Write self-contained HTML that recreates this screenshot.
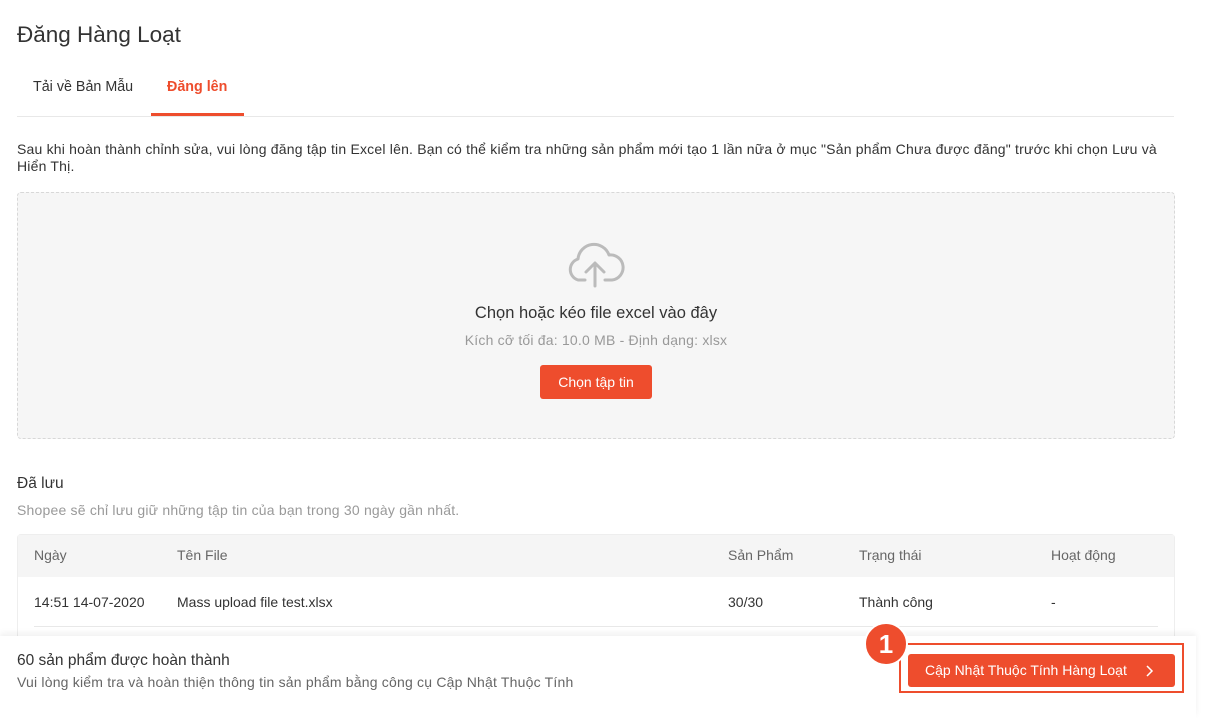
<!DOCTYPE html>
<html><head><meta charset="utf-8"><style>
*{box-sizing:border-box;margin:0;padding:0}
body{width:1206px;height:718px;overflow:hidden;background:#fff;font-family:"Liberation Sans",Arial,sans-serif;color:#333;position:relative}
.s13{font-size:14px;letter-spacing:.2px}
.title{position:absolute;left:17px;top:22px;font-size:22.5px;color:#333}
.tabs{position:absolute;left:17px;top:66px;width:1157px;height:51px;border-bottom:1px solid #e8e8e8}
.tab{position:absolute;top:13px;font-size:14.3px}
.t1{left:16px;color:#333}
.t2{left:150px;color:#ee4d2d;font-weight:bold}
.ul{position:absolute;left:134px;top:47px;width:93px;height:3px;background:#ee4d2d}
.desc{position:absolute;left:17px;top:141px;width:1160px;line-height:17px;color:#333}
.drop{position:absolute;left:17px;top:192px;width:1158px;height:247px;border:1px dashed #d8d8d8;border-radius:4px;background:#f6f6f6;text-align:center}
.drop svg{position:absolute;left:547px;top:47px}
.dt{position:absolute;left:0;right:0;top:111px;font-size:16.5px;color:#333}
.ds{position:absolute;left:0;right:0;top:139px;color:#999}
.btn{position:absolute;left:522px;top:172px;width:112px;height:34px;background:#ee4d2d;border-radius:3px;color:#fff;font-size:14px;line-height:34px}
.sv{position:absolute;left:17px;top:475px;font-size:15.5px;color:#333}
.svs{position:absolute;left:17px;top:502px;color:#999}
.tbl{position:absolute;left:17px;top:534px;width:1158px;height:120px;border:1px solid #eee;border-bottom:none;border-radius:4px 4px 0 0}
.th{height:42px;background:#f5f5f5;position:relative;font-size:14px;color:#666}
.th span,.tr span{position:absolute;top:12px}
.tr{position:relative;height:50px;border-bottom:1px solid #e8e8e8;margin:0 16px 0 16px;font-size:14px;color:#333}
.tr span{top:17px}
.foot{position:absolute;left:0;top:636px;width:1196px;height:82px;background:#fff;box-shadow:0 -3px 6px rgba(0,0,0,.06)}
.f1{position:absolute;left:17px;top:16px;font-size:15.5px;color:#333}
.f2{position:absolute;left:17px;top:38px;color:#666}
.frame{position:absolute;left:899px;top:643px;width:285px;height:50px;border:2px solid #ee4d2d}
.cbtn{position:absolute;left:908px;top:654px;width:267px;height:33px;background:#ee4d2d;border-radius:3px;color:#fff;font-size:14px;line-height:33px;padding-left:17px}
.cbtn svg{position:absolute;left:238px;top:11px}
.badge{position:absolute;left:864px;top:622px;width:44px;height:44px;border-radius:50%;background:#ee4d2d;border:2px solid #fff;color:#fff;font-size:26px;font-weight:bold;text-align:center;line-height:40px}
</style></head><body>
<div class="title">Đăng Hàng Loạt</div>
<div class="tabs"><div class="tab t1">Tải về Bản Mẫu</div><div class="tab t2">Đăng lên</div><div class="ul"></div></div>
<div class="desc s13">Sau khi hoàn thành chỉnh sửa, vui lòng đăng tập tin Excel lên. Bạn có thể kiểm tra những sản phẩm mới tạo 1 lần nữa ở mục "Sản phẩm Chưa được đăng" trước khi chọn Lưu và<br>Hiển Thị.</div>
<div class="drop">
<svg width="60" height="48" viewBox="0 0 60 48" fill="none" stroke="#bbb" stroke-width="3" stroke-linecap="round" stroke-linejoin="round"><path d="M20 40H13A11 11 0 0 1 13 19A16 16 0 0 1 44 15A12 12 0 0 1 47 40H40"/><path d="M30 46V24M21 32l9-9 9 9"/></svg>
<div class="dt">Chọn hoặc kéo file excel vào đây</div>
<div class="ds s13">Kích cỡ tối đa: 10.0 MB - Định dạng: xlsx</div>
<div class="btn">Chọn tập tin</div>
</div>
<div class="sv">Đã lưu</div>
<div class="svs s13">Shopee sẽ chỉ lưu giữ những tập tin của bạn trong 30 ngày gần nhất.</div>
<div class="tbl">
<div class="th"><span style="left:16px">Ngày</span><span style="left:159px">Tên File</span><span style="left:710px">Sản Phẩm</span><span style="left:841px">Trạng thái</span><span style="left:1033px">Hoạt động</span></div>
<div class="tr"><span style="left:0">14:51 14-07-2020</span><span style="left:143px">Mass upload file test.xlsx</span><span style="left:694px">30/30</span><span style="left:825px">Thành công</span><span style="left:1017px">-</span></div>
</div>
<div class="foot"><div class="f1">60 sản phẩm được hoàn thành</div><div class="f2 s13">Vui lòng kiểm tra và hoàn thiện thông tin sản phẩm bằng công cụ Cập Nhật Thuộc Tính</div></div>
<div class="frame"></div>
<div class="cbtn">Cập Nhật Thuộc Tính Hàng Loạt<svg width="8" height="12" viewBox="0 0 8 12" fill="none" stroke="#fff" stroke-width="1.5"><path d="M1 1l5 5-5 5"/></svg></div>
<div class="badge">1</div>
</body></html>
